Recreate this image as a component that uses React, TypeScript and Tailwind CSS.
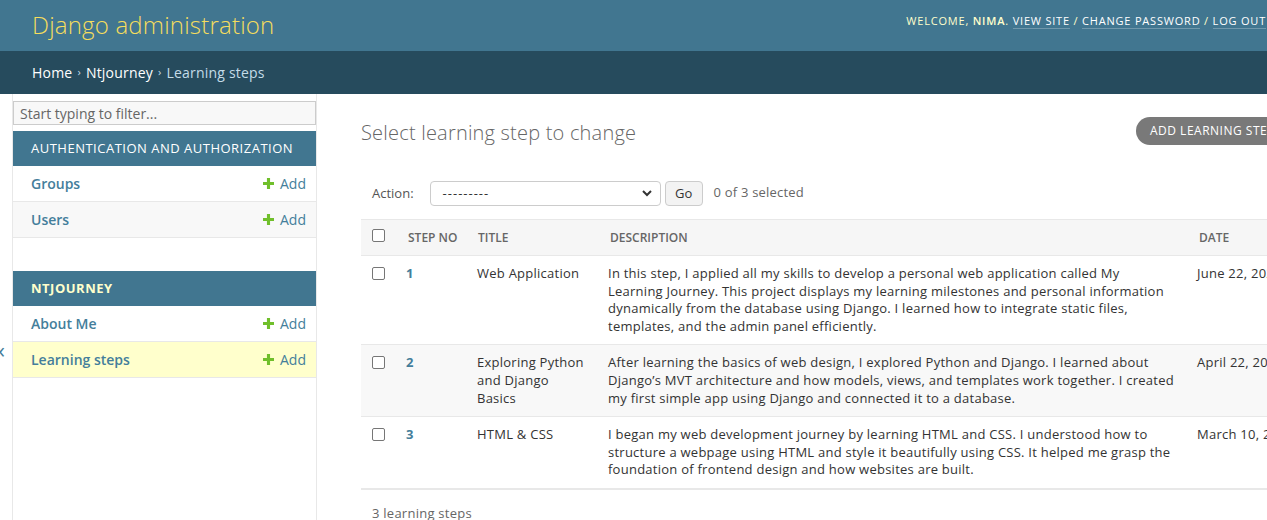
import React from 'react';

const font = { fontFamily: '"Open Sans", "Liberation Sans", sans-serif' };

const rows = [
  {
    id: 1,
    title: ['Web Application'],
    desc: [
      'In this step, I applied all my skills to develop a personal web application called My',
      'Learning Journey. This project displays my learning milestones and personal information',
      'dynamically from the database using Django. I learned how to integrate static files,',
      'templates, and the admin panel efficiently.',
    ],
    date: 'June 22, 2025',
  },
  {
    id: 2,
    title: ['Exploring Python', 'and Django', 'Basics'],
    desc: [
      'After learning the basics of web design, I explored Python and Django. I learned about',
      'Django\u2019s MVT architecture and how models, views, and templates work together. I created',
      'my first simple app using Django and connected it to a database.',
    ],
    date: 'April 22, 2025',
  },
  {
    id: 3,
    title: ['HTML & CSS'],
    desc: [
      'I began my web development journey by learning HTML and CSS. I understood how to',
      'structure a webpage using HTML and style it beautifully using CSS. It helped me grasp the',
      'foundation of frontend design and how websites are built.',
    ],
    date: 'March 10, 2025',
  },
];

function AddIcon() {
  return (
    <svg width="11" height="11" viewBox="0 0 12 12" className="shrink-0">
      <path d="M4.3 0h3.4v4.3H12v3.4H7.7V12H4.3V7.7H0V4.3h4.3z" fill="#70bf2b" />
    </svg>
  );
}

function ModelRow({ name, current, striped }: { name: string; current?: boolean; striped?: boolean }) {
  const bg = current ? 'bg-[#ffffcc]' : striped ? 'bg-[#f8f8f8]' : 'bg-white';
  return (
    <div className={`flex items-center justify-between h-[36px] pl-[18px] pr-[10px] border-b border-[#e8e8e8] ${bg}`}>
      <span className="text-[14px] font-semibold text-[#447e9b]">{name}</span>
      <span className="flex items-center gap-[6px] text-[14px] text-[#447e9b]">
        <AddIcon />
        Add
      </span>
    </div>
  );
}

function Caption({ label, current }: { label: string; current?: boolean }) {
  return (
    <div
      className={`h-[35px] flex items-center pl-[18px] bg-[#417690] text-[13px] uppercase tracking-[0.5px] ${
        current ? 'font-bold text-[#ffffcc]' : 'text-white'
      }`}
    >
      {label}
    </div>
  );
}

function Checkbox() {
  return <span className="block w-[13px] h-[13px] rounded-[2px] border border-[#767676] bg-white" />;
}

export default function App() {
  return (
    <div className="w-full h-[520px] overflow-hidden bg-white text-[#333]" style={font}>
      <div className="w-[1306px]">
        {/* header */}
        <div className="h-[51px] bg-[#417690] flex justify-between pl-8 pr-10">
          <div className="self-center text-[24px] font-light text-[#f5dd5d] leading-none -mt-[2px] tracking-[0.2px]">
            Django administration
          </div>
          <div className="pt-[14px] text-[11px] uppercase tracking-[0.8px] text-[#ffffcc] leading-[14px]">
            Welcome, <strong className="font-semibold">Nima</strong>.{' '}
            <span className="text-white border-b border-white/25">View site</span> /{' '}
            <span className="text-white border-b border-white/25">Change password</span> /{' '}
            <span className="text-white border-b border-white/25">Log out</span>
          </div>
        </div>

        {/* breadcrumbs */}
        <div className="h-[43px] bg-[#264b5d] flex items-center pl-8 text-[14px] text-[#c4dce8] tracking-[0.2px]">
          <span className="text-white">Home</span>
          <span className="mx-[5px] text-[11px]">›</span>
          <span className="text-white">Ntjourney</span>
          <span className="mx-[5px] text-[11px]">›</span>
          <span>Learning steps</span>
        </div>

        <div className="flex h-[426px]">
          {/* sidebar toggle */}
          <div className="w-[13px] shrink-0 border-r border-[#e8e8e8] pt-[245px] overflow-hidden">
            <span className="block -ml-[6px] text-[22px] leading-[20px] text-[#447e9b]">«</span>
          </div>

          {/* sidebar */}
          <div className="w-[304px] shrink-0 border-r border-[#e8e8e8] pt-[7px]">
            <div className="h-[24px] border border-[#cccccc] bg-[#f8f8f8] flex items-center pl-[6px] text-[14px] text-[#666]">
              Start typing to filter...
            </div>
            <div className="mt-[6px]">
              <Caption label="Authentication and Authorization" />
              <ModelRow name="Groups" />
              <ModelRow name="Users" striped />
            </div>
            <div className="mt-[33px]">
              <Caption label="Ntjourney" current />
              <ModelRow name="About Me" />
              <ModelRow name="Learning steps" current />
            </div>
          </div>

          {/* main content */}
          <div className="flex-1 pl-[44px] pt-[23px]">
            <div className="flex items-center justify-between w-[945px] h-[28px]">
              <h1 className="text-[20px] font-light text-[#666] mt-[3px] tracking-[0.2px]">
                Select learning step to change
              </h1>
              <span className="w-[170px] h-[28px] rounded-l-full bg-[#797979] text-white text-[12px] uppercase tracking-[0.5px] flex items-center pl-[14px]">
                Add learning step
              </span>
            </div>

            {/* actions */}
            <div className="mt-[36px] h-[25px] flex items-center pl-[11px] text-[13px] text-[#666]">
              <span className="text-[#555] mr-[16px]">Action:</span>
              <div className="w-[231px] h-[25px] rounded-[4px] border border-[#cccccc] bg-white flex items-center justify-between pl-[12px] pr-[8px] text-[#333]">
                <span className="tracking-[1px]">---------</span>
                <svg width="10" height="7" viewBox="0 0 10 7">
                  <path d="M1 1l4 4 4-4" stroke="#333" strokeWidth="2" fill="none" />
                </svg>
              </div>
              <span className="ml-[4px] w-[38px] h-[25px] rounded-[4px] border border-[#cccccc] bg-[#f3f3f3] flex items-center justify-center text-[#333]">
                Go
              </span>
              <span className="ml-[11px] -mt-[2px] text-[#666] tracking-[0.2px]">0 of 3 selected</span>
            </div>

            {/* table */}
            <table className="mt-[13px] table-fixed border-collapse w-[945px] text-[13px]">
              <colgroup>
                <col className="w-[37px]" />
                <col className="w-[70px]" />
                <col className="w-[132px]" />
                <col className="w-[589px]" />
                <col className="w-[117px]" />
              </colgroup>
              <thead>
                <tr className="h-[36px] bg-[#f6f6f6] border-y border-[#e8e8e8] text-[12px] uppercase text-[#666] font-semibold">
                  <th className="pl-[11px] text-left align-middle">
                    <div className="-mt-[4px]">
                      <Checkbox />
                    </div>
                  </th>
                  <th className="pl-[10px] text-left font-semibold whitespace-nowrap">Step no</th>
                  <th className="pl-[10px] text-left font-semibold">Title</th>
                  <th className="pl-[10px] text-left font-semibold">Description</th>
                  <th className="pl-[10px] text-left font-semibold">Date</th>
                </tr>
              </thead>
              <tbody className="tracking-[0.25px]">
                {rows.map((r, i) => (
                  <tr
                    key={r.id}
                    className={`align-top leading-[17.6px] ${i === 1 ? 'bg-[#f8f8f8]' : 'bg-white'} ${
                      i === rows.length - 1 ? 'border-b-2' : 'border-b'
                    } border-[#e8e8e8]`}
                  >
                    <td className="pl-[11px] pt-[11px]">
                      <Checkbox />
                    </td>
                    <td className="pl-[8px] pt-[9px] pb-[9px] font-bold text-[#447e9b]">{r.id}</td>
                    <td className="pl-[9px] pt-[9px] pb-[9px] text-[#333]">
                      {r.title.map((t) => (
                        <div key={t} className="whitespace-nowrap">
                          {t}
                        </div>
                      ))}
                    </td>
                    <td className="pl-[8px] pt-[9px] pb-[9px] text-[#333]">
                      {r.desc.map((t) => (
                        <div key={t} className="whitespace-nowrap">
                          {t}
                        </div>
                      ))}
                    </td>
                    <td className="pl-[8px] pt-[9px] pb-[9px] whitespace-nowrap text-[#333]">{r.date}</td>
                  </tr>
                ))}
              </tbody>
            </table>

            <div className="mt-[14px] pl-[11px] text-[13px] text-[#666] tracking-[0.25px]">3 learning steps</div>
          </div>
        </div>
      </div>
    </div>
  );
}
